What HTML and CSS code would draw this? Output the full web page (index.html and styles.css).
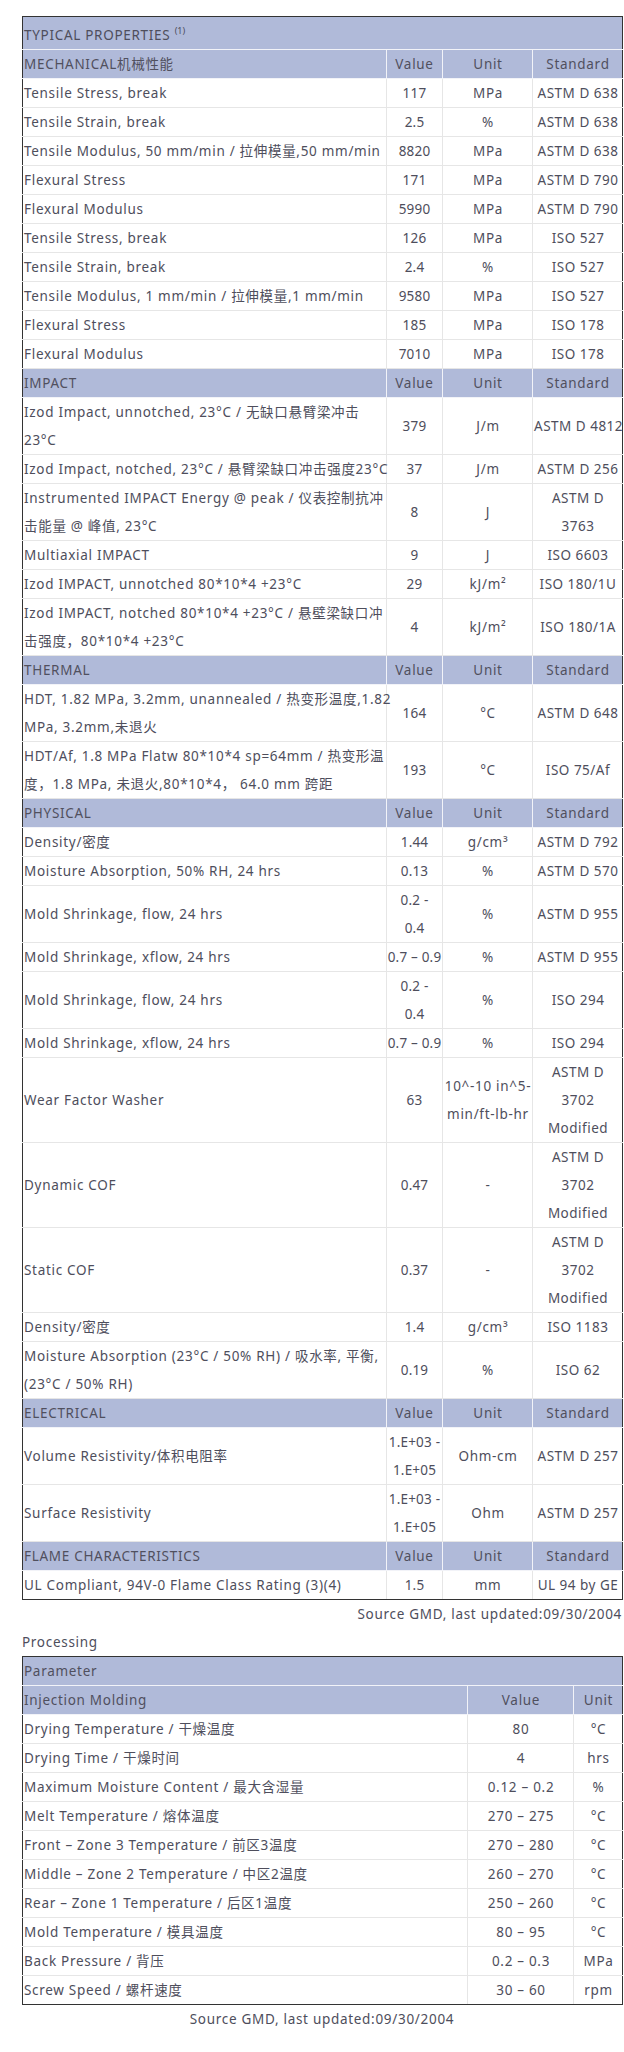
FILE: index.html
```html
<!DOCTYPE html>
<html lang="en">
<head>
<meta charset="utf-8">
<title>Typical Properties</title>
<link rel="stylesheet" href="styles.css">
</head>
<body>
<div class="sheet">
  <table class="grid props">
    <colgroup><col class="c-lbl"><col class="c-val"><col class="c-unit"><col class="c-std"></colgroup>
    <tr class="title"><td colspan="4">TYPICAL PROPERTIES <sup>(1)</sup></td></tr>
    <tr class="group"><td>MECHANICAL机械性能</td><td>Value</td><td>Unit</td><td>Standard</td></tr>
    <tr><td>Tensile Stress, break</td><td>117</td><td>MPa</td><td>ASTM D 638</td></tr>
    <tr><td>Tensile Strain, break</td><td>2.5</td><td>%</td><td>ASTM D 638</td></tr>
    <tr><td>Tensile Modulus, 50 mm/min / 拉伸模量,50 mm/min</td><td>8820</td><td>MPa</td><td>ASTM D 638</td></tr>
    <tr><td>Flexural Stress</td><td>171</td><td>MPa</td><td>ASTM D 790</td></tr>
    <tr><td>Flexural Modulus</td><td>5990</td><td>MPa</td><td>ASTM D 790</td></tr>
    <tr><td>Tensile Stress, break</td><td>126</td><td>MPa</td><td>ISO 527</td></tr>
    <tr><td>Tensile Strain, break</td><td>2.4</td><td>%</td><td>ISO 527</td></tr>
    <tr><td>Tensile Modulus, 1 mm/min / 拉伸模量,1 mm/min</td><td>9580</td><td>MPa</td><td>ISO 527</td></tr>
    <tr><td>Flexural Stress</td><td>185</td><td>MPa</td><td>ISO 178</td></tr>
    <tr><td>Flexural Modulus</td><td>7010</td><td>MPa</td><td>ISO 178</td></tr>

    <tr class="group"><td>IMPACT</td><td>Value</td><td>Unit</td><td>Standard</td></tr>
    <tr><td>Izod Impact, unnotched, 23°C / 无缺口悬臂梁冲击<br>23°C</td><td>379</td><td>J/m</td><td>ASTM D 4812</td></tr>
    <tr><td>Izod Impact, notched, 23°C / 悬臂梁缺口冲击强度23°C</td><td>37</td><td>J/m</td><td>ASTM D 256</td></tr>
    <tr><td>Instrumented IMPACT Energy @ peak / 仪表控制抗冲<br>击能量 @ 峰值, 23°C</td><td>8</td><td>J</td><td>ASTM D<br>3763</td></tr>
    <tr><td>Multiaxial IMPACT</td><td>9</td><td>J</td><td>ISO 6603</td></tr>
    <tr><td>Izod IMPACT, unnotched 80*10*4 +23°C</td><td>29</td><td>kJ/m²</td><td>ISO 180/1U</td></tr>
    <tr><td>Izod IMPACT, notched 80*10*4 +23°C / 悬壁梁缺口冲<br>击强度，80*10*4 +23°C</td><td>4</td><td>kJ/m²</td><td>ISO 180/1A</td></tr>

    <tr class="group"><td>THERMAL</td><td>Value</td><td>Unit</td><td>Standard</td></tr>
    <tr><td>HDT, 1.82 MPa, 3.2mm, unannealed / 热变形温度,1.82<br>MPa, 3.2mm,未退火</td><td>164</td><td>°C</td><td>ASTM D 648</td></tr>
    <tr><td>HDT/Af, 1.8 MPa Flatw 80*10*4 sp=64mm / 热变形温<br>度，1.8 MPa, 未退火,80*10*4，&nbsp;64.0 mm 跨距</td><td>193</td><td>°C</td><td>ISO 75/Af</td></tr>

    <tr class="group"><td>PHYSICAL</td><td>Value</td><td>Unit</td><td>Standard</td></tr>
    <tr><td>Density/密度</td><td>1.44</td><td>g/cm³</td><td>ASTM D 792</td></tr>
    <tr><td>Moisture Absorption, 50% RH, 24 hrs</td><td>0.13</td><td>%</td><td>ASTM D 570</td></tr>
    <tr><td>Mold Shrinkage, flow, 24 hrs</td><td>0.2 -<br>0.4</td><td>%</td><td>ASTM D 955</td></tr>
    <tr><td>Mold Shrinkage, xflow, 24 hrs</td><td>0.7 – 0.9</td><td>%</td><td>ASTM D 955</td></tr>
    <tr><td>Mold Shrinkage, flow, 24 hrs</td><td>0.2 -<br>0.4</td><td>%</td><td>ISO 294</td></tr>
    <tr><td>Mold Shrinkage, xflow, 24 hrs</td><td>0.7 – 0.9</td><td>%</td><td>ISO 294</td></tr>
    <tr><td>Wear Factor Washer</td><td>63</td><td>10^-10 in^5-<br>min/ft-lb-hr</td><td>ASTM D<br>3702<br>Modified</td></tr>
    <tr><td>Dynamic COF</td><td>0.47</td><td>-</td><td>ASTM D<br>3702<br>Modified</td></tr>
    <tr><td>Static COF</td><td>0.37</td><td>-</td><td>ASTM D<br>3702<br>Modified</td></tr>
    <tr><td>Density/密度</td><td>1.4</td><td>g/cm³</td><td>ISO 1183</td></tr>
    <tr><td>Moisture Absorption (23°C / 50% RH) / 吸水率, 平衡,<br>(23°C / 50% RH)</td><td>0.19</td><td>%</td><td>ISO 62</td></tr>

    <tr class="group"><td>ELECTRICAL</td><td>Value</td><td>Unit</td><td>Standard</td></tr>
    <tr><td>Volume Resistivity/体积电阻率</td><td>1.E+03 -<br>1.E+05</td><td>Ohm-cm</td><td>ASTM D 257</td></tr>
    <tr><td>Surface Resistivity</td><td>1.E+03 -<br>1.E+05</td><td>Ohm</td><td>ASTM D 257</td></tr>

    <tr class="group"><td>FLAME CHARACTERISTICS</td><td>Value</td><td>Unit</td><td>Standard</td></tr>
    <tr><td>UL Compliant, 94V-0 Flame Class Rating (3)(4)</td><td>1.5</td><td>mm</td><td>UL 94 by GE</td></tr>
  </table>
  <p class="source source-right">Source GMD, last updated:09/30/2004</p>

  <p class="caption">Processing</p>
  <table class="grid proc">
    <colgroup><col class="p-lbl"><col class="p-val"><col class="p-unit"></colgroup>
    <tr class="group"><td colspan="3">Parameter</td></tr>
    <tr class="group"><td>Injection Molding</td><td>Value</td><td>Unit</td></tr>
    <tr><td>Drying Temperature / 干燥温度</td><td>80</td><td>°C</td></tr>
    <tr><td>Drying Time / 干燥时间</td><td>4</td><td>hrs</td></tr>
    <tr><td>Maximum Moisture Content / 最大含湿量</td><td>0.12 – 0.2</td><td>%</td></tr>
    <tr><td>Melt Temperature / 熔体温度</td><td>270 – 275</td><td>°C</td></tr>
    <tr><td>Front – Zone 3 Temperature / 前区3温度</td><td>270 – 280</td><td>°C</td></tr>
    <tr><td>Middle – Zone 2 Temperature / 中区2温度</td><td>260 – 270</td><td>°C</td></tr>
    <tr><td>Rear – Zone 1 Temperature / 后区1温度</td><td>250 – 260</td><td>°C</td></tr>
    <tr><td>Mold Temperature / 模具温度</td><td>80 – 95</td><td>°C</td></tr>
    <tr><td>Back Pressure / 背压</td><td>0.2 – 0.3</td><td>MPa</td></tr>
    <tr><td>Screw Speed / 螺杆速度</td><td>30 – 60</td><td>rpm</td></tr>
  </table>
  <p class="source source-center">Source GMD, last updated:09/30/2004</p>
</div>
</body>
</html>
```

FILE: styles.css
```css
html, body {
  margin: 0;
  padding: 0;
  background: #ffffff;
}

body {
  font-family: "Noto Sans", "Noto Sans CJK SC", sans-serif;
  font-size: 13.5px;
  letter-spacing: 0.7px;
  color: #4e4e5c;
}

.sheet {
  width: 600px;
  padding: 16px 0 0 22px;
}

.grid {
  width: 600px;
  table-layout: fixed;
  border-collapse: collapse;
  border: 1px solid #333333;
}

.grid td {
  padding: 0 0 0 1px;
  line-height: 28px;
  vertical-align: middle;
  text-align: center;
  white-space: nowrap;
  border: 1px solid #e6e6e6;
}

.props td:nth-child(2) {
  padding: 0;
  letter-spacing: 0.2px;
}

.props td:nth-child(4) {
  letter-spacing: 0.5px;
}

.grid td:first-child {
  text-align: left;
  border-left: 1px solid #333333;
}

.grid td:last-child {
  border-right: 1px solid #333333;
}

.grid tr:first-child td {
  border-top: 1px solid #333333;
}

.grid tr:last-child td {
  border-bottom: 1px solid #333333;
}

.grid tr.group td {
  background: #b0bad9;
  border-color: #f2f3f8;
  color: #50505e;
  letter-spacing: 0.7px;
}

.grid tr.group td:first-child {
  border-left-color: #333333;
}

.grid tr.group td:last-child {
  border-right-color: #333333;
}

.grid tr:first-child.group td,
.grid tr.title td {
  border-top-color: #333333;
}

.grid tr.title td {
  background: #b0bad9;
  text-align: left;
  padding-top: 4px;
  border-bottom: 1px solid #f2f3f8;
  border-left: 1px solid #333333;
  border-right: 1px solid #333333;
}

.grid tr.title sup {
  font-size: 9px;
  letter-spacing: 0;
  line-height: 0;
  vertical-align: 6px;
}

.c-lbl { width: 364px; }
.c-val { width: 56px; }
.c-unit { width: 90px; }
.c-std { width: 90px; }

.p-lbl { width: 445px; }
.p-val { width: 106px; }
.p-unit { width: 49px; }

.source {
  margin: 0;
  line-height: 28px;
}

.source-right {
  text-align: right;
}

.source-center {
  text-align: center;
}

.caption {
  margin: 0;
  line-height: 28px;
}
```
